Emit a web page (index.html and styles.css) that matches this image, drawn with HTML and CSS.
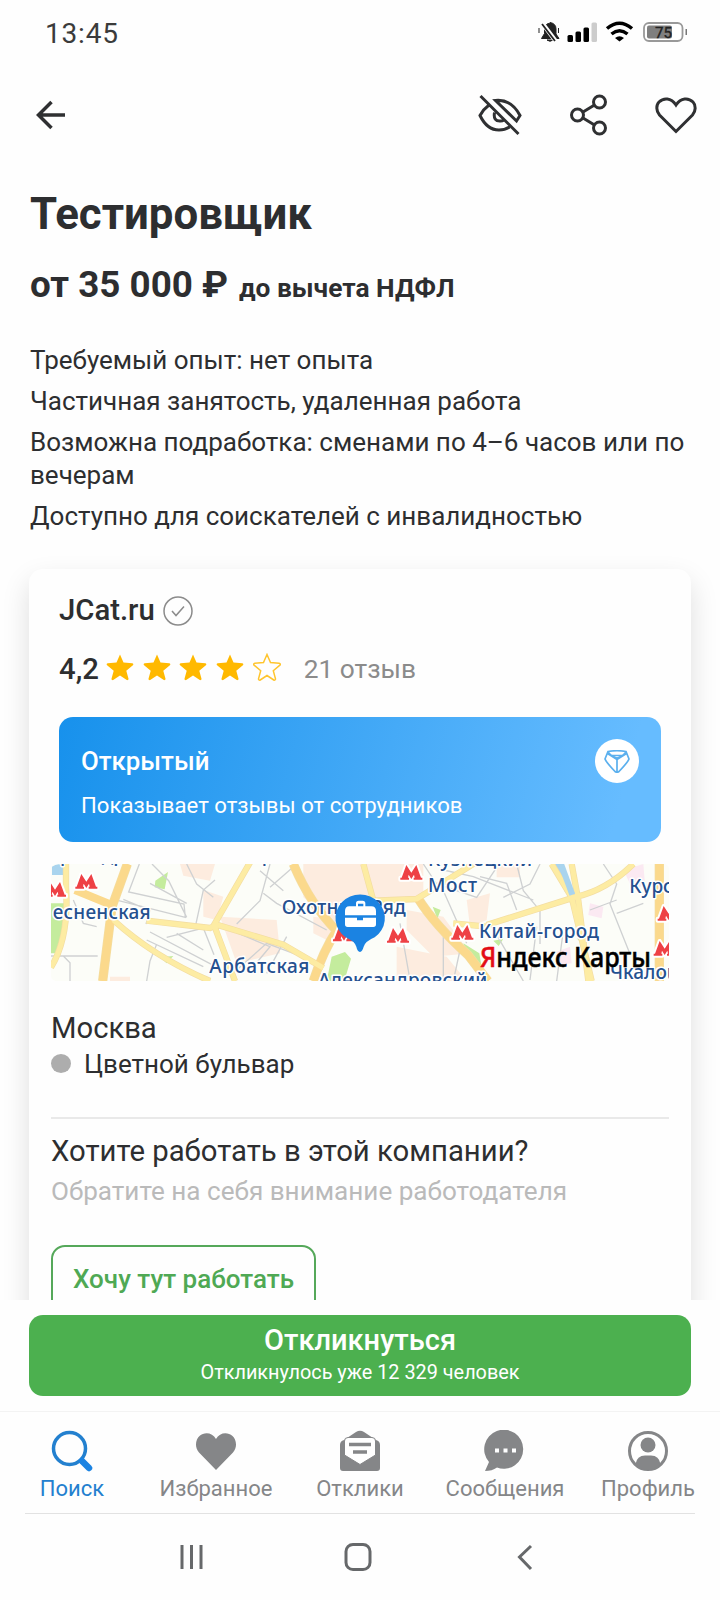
FILE: index.html
```html
<!DOCTYPE html>
<html lang="ru">
<head>
<meta charset="utf-8">
<title>Тестировщик</title>
<link rel="stylesheet" href="styles.css">
</head>
<body>
<svg class="defs" aria-hidden="true">
  <defs>
    <symbol id="star" viewBox="0 0 28 28"><path d="M14 1.500l3.500 8 8.700.7c1.200.1 1.500 1.400.7 2l-6.600 5.600 2.200 8c.2 1-.9 1.700-1.700 1.200L14 22.500l-6.800 4.500c-.8.5-1.900-.2-1.700-1.200l2.200-8-6.600-5.600c-.8-.6-.5-1.900.7-2l8.700-.7z"/></symbol>
    <symbol id="metro" viewBox="-6 -6 78 56" overflow="visible"><path d="M0 44V38H4L18 0L33 23L48 0L62 38H66V44H40V38H43L41 29L33 42L25 29L23 38H26V44Z" fill="#fff" stroke="#fff" stroke-width="12" stroke-linejoin="round"/><path d="M0 44V38H4L18 0L33 23L48 0L62 38H66V44H40V38H43L41 29L33 42L25 29L23 38H26V44Z" fill="#ee4145"/></symbol>
  </defs>
</svg>
<main class="screen">
  <header class="status">
    <span class="time">13:45</span>
    <svg class="status-icons" width="150" height="24" viewBox="0 0 150 24">
      <path d="M3.500 18.500l3-5V9q1-5.500 4.500-5.500l1-1q6 1 6 6.500v5l3 4.500zM9 20h6q-3 2.500-6 0M1 8v5M20.500 8v5" fill="#222" stroke="#222" stroke-width="1"/>
      <path d="M4.500 3.500L18 21.500" stroke="#fff" stroke-width="4.500"/><path d="M4 4L17 21" stroke="#222" stroke-width="1.800"/>
      <rect x="29.500" y="15" width="5.500" height="7" rx="1.500"/><rect x="37.500" y="11.500" width="5.500" height="10.500" rx="1.500"/><rect x="45.500" y="7.500" width="5.500" height="14.500" rx="1.500"/><rect x="53.500" y="2.500" width="5.500" height="19.500" rx="1.500" fill="#ccc"/>
      <path d="M69 8.500q12.500-10.500 25 0M73.500 14q8-6.500 16 0" fill="none" stroke="#000" stroke-width="3.500"/><path d="M77 18q4.500-3.500 9 0L81.500 21.500z"/>
      <rect x="106" y="3" width="38.500" height="18" rx="5" fill="#fff" stroke="#999" stroke-width="1.800"/><rect x="109" y="5.500" width="25" height="13" rx="2" fill="#7f7f7f"/><rect x="147.500" y="9" width="1.500" height="6" fill="#777"/>
      <text class="battery" x="117" y="17.500">75</text>
    </svg>
  </header>
  <nav class="toolbar">
    <svg width="30" height="30" viewBox="0 0 30 30" class="line arrow"><path d="M29 15H3M15.500 2L2.500 15l13 13"/></svg>
    <div class="tools">
      <svg width="44" height="44" viewBox="0 0 44 44" class="line"><path d="M2.500 3l38 38M10.500 12.500Q5 16.500 2 22.500q7 14.500 19 14.500 6 0 10.500-3M17.500 7.500q16-1.500 24.500 15l-3.500 5.500zM16.500 19.500q-1.500 9 6 8.500 2 0 3.500-1"/></svg>
      <svg width="38" height="42" viewBox="0 0 38 42" class="line"><circle cx="29.500" cy="8" r="6"/><circle cx="7.500" cy="21" r="6"/><circle cx="29.500" cy="34" r="6"/><path d="M13 18l11.500-7M13 24l11.500 7"/></svg>
      <svg width="42" height="38" viewBox="0 0 42 38" class="line"><path d="M21 35.500L4.500 19C1 15 1 9 4 6c4.500-4.500 12-4.500 17 3 5-7.500 12.500-7.500 17-3 3 3 3 9-.5 13z"/></svg>
    </div>
  </nav>
  <section class="intro">
    <h1>Тестировщик</h1>
    <p class="salary"><span class="sum">от 35 000 ₽</span> <small>до вычета НДФЛ</small></p>
    <p>Требуемый опыт: нет опыта</p>
    <p>Частичная занятость, удаленная работа</p>
    <p>Возможна подработка: сменами по 4–6 часов или по<br>вечерам</p>
    <p>Доступно для соискателей с инвалидностью</p>
  </section>
  <article class="card">
    <div class="company"><span class="name">JCat.ru</span>
      <svg width="30" height="30" viewBox="0 0 30 30"><circle cx="15" cy="15" r="14" class="verify"/><path d="M9 15l4 4.500 8-9" class="verify"/></svg>
    </div>
    <div class="rating"><span class="score">4,2</span>
      <div class="stars">
        <svg class="star"><use href="#star"/></svg><svg class="star"><use href="#star"/></svg><svg class="star"><use href="#star"/></svg><svg class="star"><use href="#star"/></svg><svg class="star empty"><use href="#star"/></svg>
      </div>
      <span class="reviews">21 отзыв</span>
    </div>
    <div class="banner">
      <div><b class="open">Открытый</b><span class="open-note">Показывает отзывы от сотрудников</span></div>
      <span class="badge"><svg width="26" height="23" viewBox="0 0 26 23"><path d="M4 1.500q9-1.500 18 0L25 9q-1 3-10 12.500-2 1.500-4 0Q2 12 1 9zM4 2q4 5 9 6 5-1 9-6M8 5.500h10M13 8v13.500M3.500 3.500l9.500 6 9.500-6"/></svg></span>
    </div>
    <svg class="map" viewBox="63 42 1854 351" preserveAspectRatio="none">
      <rect x="63" y="42" width="1854" height="351" fill="#fcfdf8"/>
      <g fill="#fdecdf">
        <path d="M450 42h105l-15 50-80-15zM520 120l60 20-20 70-40-10zM570 200l170 10 10 100-130 30zM820 42h180v130l-70 60-110-90zM850 200l80 10-20 70-60-30zM1000 42h180v100l-180 20zM1130 180l110 20 80 110-110 10-80-80zM1310 150l70-20-10 80-50 20zM1100 290l150 30 60 73h-210zM240 380h60v13h-60zM1400 42h70v40h-70z"/>
      </g>
      <path d="M1780 60l60-18 5 60-35 20zM1680 160l40 10-5 35-40-10zM1580 305l40-15 5 50-40 5z" fill="#fbe9f2"/>
      <g fill="#c4ec9d"><path d="M376 92l38-26-10 52-30-6zM63 160h42v60l-20 90H63zM390 322l40-4-20 22zM905 320l40-14 18 20-20 67h-53zM1208 170l24 10-10 26zM1300 280l48 30 10 60-40-40zM1390 272l30-6-14 22zM1640 265l30 10-5 15z"/></g>
      <path d="M66 50q20-15 40 0v25H66zM1575 42h20l30 75-20 10z" fill="#a9d4ee"/>
      <g class="streets"><path d="M328 42l-32 84 166 36 4 40-200-50M280 148l80 34-12 40M360 100l110 60M366 42l50 50 54 110M470 42l30 60 50 40M555 90L520 120l-24 110M200 230l-40-10-30-70M63 318h140M100 318l20 20v55M350 393l10-60 20-50M360 246l190 100M350 270l170 80M410 262l110-28 32 80M440 250l80 50M690 62l70 60M720 42l-30 110-70 70M700 130l40 30 150 80M600 240l120 50-50 60M620 360l90-80 160 60M770 260l-60 110M800 42l-80 70"/></g>
      <g class="streets"><path d="M1110 220l30 170M1180 42l40 60 120 40 60-90M1230 100l80 180M1240 60l90 20 180 70M1350 80l80 20 30 80M1460 42l20 80 50 60v100M1530 42l-30 60-80 40M1240 260v133M1290 300l-20 93M1380 220l100 173M1520 230l-20 160M1680 180l80-30M1720 42l40 60-20 60 60 150M1840 160l-80 30M1600 240l-20 153"/></g>
      <g class="roads">
        <path class="edge r1" d="M292 42L246 170 218 393M790 42q50 120 130 200-40 60-70 151M1164 145q50 80 150 170l60 78M1888 42v351"/>
        <path class="edge r2" d="M670 20L552 225 615 393M350 212l190 22 20-10 200 60 120 70M250 210q120 110 290 183M108 42v70q10 150-45 240M1565 42l60 100 60 251M1625 42l20 110 30 241M1370 225l270-85q90-20 170-98M1000 42l30 110 130-5 210-130M1270 220l100 10"/>
        <path class="r1" d="M292 42L246 170 218 393M135 120l110 45M790 42q50 120 130 200-40 60-70 151M1164 145q50 80 150 170l60 78M1888 42v351"/>
        <path class="r2" d="M670 20L552 225 615 393M350 212l190 22 20-10 200 60 120 70M250 210q120 110 290 183M108 42v70q10 150-45 240M1565 42l60 100 60 251M1625 42l20 110 30 241M1370 225l270-85q90-20 170-98M1000 42l30 110 130-5 210-130M1270 220l100 10"/>
      </g>
      <path d="M1593 42l34 92" stroke="#a9d4ee" stroke-width="18"/>
      <g class="places">
        <text x="68" y="206" textLength="294">есненская</text>
        <text x="755" y="191" textLength="372">Охотный Ряд</text>
        <text x="538" y="370" textLength="300">Арбатская</text>
        <text x="864" y="411" textLength="508">Александровский</text>
        <text x="1194" y="47" textLength="312">Кузнецкий</text>
        <text x="1194" y="126" textLength="147">Мост</text>
        <text x="1347" y="265" textLength="360">Китай-город</text>
        <text x="1798" y="129">Курская</text>
        <text x="1740" y="386">Чкаловская</text>
        <text x="90" y="34">р</text><text x="215" y="36">д</text><text x="250" y="32">р</text><text x="695" y="34">р</text>
      </g>
      <use href="#metro" x="130" y="66" width="78" height="56"/><use href="#metro" x="36" y="90" width="78" height="56"/><use href="#metro" x="1105" y="39" width="78" height="56"/><use href="#metro" x="1065" y="228" width="78" height="56"/><use href="#metro" x="1258" y="219" width="78" height="56"/><use href="#metro" x="903" y="224" width="78" height="56"/><use href="#metro" x="1877" y="162" width="78" height="56"/><use href="#metro" x="1865" y="267" width="78" height="56"/>
      <path d="M990 306q-8-2-11-16-5-16-32-28a74 71 0 1 1 87 0q-28 12-33 28-4 14-11 16z" fill="#1b83e2"/>
      <path d="M958 169h20v-9q0-8 8-8h12q8 0 8 8v9h18q14 0 14 14v13h-93v-13q0-14 13-14zM984 169h16v-8h-16zM945 203h36v8h18v-8h39v20q0 8-8 8h-77q-8 0-8-8z" fill="#fff" fill-rule="evenodd"/>
      <text class="brand" x="1350" y="352" textLength="513" lengthAdjust="spacingAndGlyphs"><tspan fill="#e30d16">Я</tspan>ндекс Карты</text>
    </svg>
    <div class="place">
      <p class="city">Москва</p>
      <p class="station"><i></i><span>Цветной бульвар</span></p>
    </div>
    <div class="want">
      <p class="question">Хотите работать в этой компании?</p>
      <p class="hint">Обратите на себя внимание работодателя</p>
      <button class="outline">Хочу тут работать</button>
    </div>
  </article>
</main>
<div class="apply-bar"><button class="apply"><span class="apply-main">Откликнуться</span><span class="apply-sub">Откликнулось уже 12 329 человек</span></button></div>
<nav class="tabs">
  <a class="active"><svg viewBox="0 0 42 42"><circle cx="18.500" cy="18.500" r="16" fill="none" stroke="#2380cf" stroke-width="3.500"/><path d="M31 31l7 7" stroke="#1b83e2" stroke-width="6.500" stroke-linecap="round"/></svg><span>Поиск</span></a>
  <a><svg viewBox="0 0 42 42"><path d="M21 40L4 22.500C-1 17 1 9 4.500 6 9.500 1.500 17.500 2.500 21 9 24.500 2.500 32.500 1.500 37.500 6 41 9 43 17 38 22.500z"/></svg><span>Избранное</span></a>
  <a><svg viewBox="0 0 42 42"><path d="M1 15q0-4 4-5L17 2q4-2.500 8 0l12 8q4 1 4 5v23q0 3-3 3H4q-3 0-3-3z"/><path d="M5.500 11q0-3.500 3.500-3.500h24q3.500 0 3.500 3.500v14L21 34.500 5.500 25z" fill="#fff" stroke="#858688"/><path d="M10 14.500h22M14 22h14" stroke="#858688" stroke-width="3.500"/></svg><span>Отклики</span></a>
  <a class="messages"><svg viewBox="0 0 42 42"><path d="M1 41l4-9A19.500 19.500 0 1 1 13 37.500Q8 41 1 41z"/><path d="M11 18.500h4v4h-4zM19.500 18.500h4v4h-4zM28 18.500h4v4h-4z" fill="#fff"/></svg><span>Сообщения</span></a>
  <a><svg viewBox="0 0 42 42"><circle cx="21" cy="21" r="18.500" fill="#fff" stroke="#858688" stroke-width="3"/><circle cx="21" cy="15" r="7.500"/><path d="M8.500 34Q10 25.500 18 25.500h6q8 0 9.500 8.500-12 11-25 0z"/></svg><span>Профиль</span></a>
</nav>
<footer class="system">
  <svg viewBox="0 0 30 30"><path d="M7 3v24M16.500 3v24M26 3v24"/></svg>
  <svg viewBox="0 0 30 30"><rect x="3" y="2.500" width="24" height="25" rx="7"/></svg>
  <svg viewBox="0 0 30 30"><path d="M20 4L8.500 15 20 27"/></svg>
</footer>
</body>
</html>
```

FILE: styles.css
```css
* { box-sizing: border-box; }
body { margin: 0; width: 720px; height: 1600px; overflow: hidden; background: #fefefe; color: #2d2e30; font-family: Roboto, sans-serif; display: flex; flex-direction: column; }
p, h1 { margin: 0; }
button { font-family: inherit; cursor: pointer; }
.defs { position: absolute; width: 0; height: 0; }
.screen { height: 1300px; overflow: hidden; flex: none; display: flex; flex-direction: column; }

.status { height: 66px; flex: none; display: flex; justify-content: space-between; align-items: center; padding: 0 32px 0 45px; }
.time { font-size: 28px; letter-spacing: .8px; color: #3b3b3b; }
.status-icons { margin-bottom: 3px; }
.battery { font-size: 15px; fill: #222; stroke: #222; stroke-width: .4; }
.toolbar { height: 98px; flex: none; display: flex; justify-content: space-between; align-items: center; padding: 0 23px 0 36px; }
.tools { display: flex; align-items: center; gap: 47.500px; }
.line { fill: none; stroke: #2f3032; stroke-width: 3; }
.arrow { stroke-width: 3.500; }

.intro { flex: none; padding: 25px 30px 0; height: 405px; font-size: 26px; line-height: 33px; }
.intro h1 { font-size: 43.800px; line-height: 50px; font-weight: 700; white-space: nowrap; }
.salary { margin: 23px 0 33px; line-height: 45px; font-weight: 700; display: flex; align-items: baseline; gap: 11px; }
.sum { font-size: 36.800px; }
.salary small { font-size: 26.300px; }
.intro p + p { margin-top: 8px; }
.intro .salary + p { margin-top: 0; }
.intro p { white-space: nowrap; }

.card { flex: none; margin: 0 29px; height: 800px; padding: 23px 22px 0; background: #fefefe; border-radius: 14px; box-shadow: 0 12px 28px rgba(0, 0, 0, .13); }
.company { height: 38px; display: flex; align-items: center; gap: 8px; padding-left: 8px; }
.name, .score { font-size: 29.300px; line-height: 34px; font-weight: 500; }
.name { margin-bottom: 2px; }
.verify { fill: none; stroke: #8b8b8b; stroke-width: 1.500; }
.rating { height: 38px; margin-top: 20px; padding-left: 8px; display: flex; align-items: center; }
.score { width: 47px; }
.stars { display: flex; gap: 8.700px; margin-bottom: 4px; }
.star { width: 28px; height: 28px; fill: #ffb900; }
.empty { fill: none; stroke: #ffc52e; stroke-width: 1.500; }
.reviews { margin-left: 23px; font-size: 26.300px; color: #8b8b8b; }
.banner { margin: 29px 8px 0; height: 125px; border-radius: 14px; padding: 22px; display: flex; justify-content: space-between; background: linear-gradient(105deg, #1791ec, #66bcff 92%); color: #fff; }
.open, .open-note { display: block; white-space: nowrap; }
.open { font-size: 25.800px; line-height: 44px; font-weight: 500; }
.open-note { font-size: 22.150px; line-height: 45px; }
.badge { width: 44px; height: 44px; border-radius: 50%; background: #fff; display: grid; place-items: center; }
.badge svg { fill: none; stroke: #5bb0ee; stroke-width: 1.700; }
.map { display: block; width: 618px; height: 117px; margin-top: 22px; border-radius: 5px; }
.streets { fill: none; stroke: #cfd1d2; stroke-width: 4; }
.roads { fill: none; }
.r1 { stroke: #fbd98c; stroke-width: 24; }
.r2 { stroke: #fdeca3; stroke-width: 15; }
.roads .edge { stroke: #f3dda2; }
.roads .edge.r1 { stroke-width: 28; }
.roads .edge.r2 { stroke-width: 19; }
.places { font: 500 57px "Noto Sans", sans-serif; fill: #24508f; stroke: #fff; stroke-width: 9px; paint-order: stroke; stroke-linejoin: round; }
.brand { font: 500 82px "Noto Sans", sans-serif; stroke: #000; stroke-width: 1.500; }
.brand tspan { stroke: #e30d16; }
.place { height: 138px; padding-top: 29px; border-bottom: 2px solid #e9e9e9; }
.city { font-size: 29.200px; line-height: 36px; }
.station { font-size: 26px; line-height: 37px; display: flex; align-items: center; gap: 13px; }
.station i { width: 20px; height: 19px; border-radius: 50%; background: #adadad; margin-bottom: 2px; }
.want { padding-top: 13px; white-space: nowrap; }
.question { font-size: 29.300px; line-height: 38px; }
.hint { font-size: 26.100px; line-height: 42px; color: #bababa; }
.outline { display: block; width: 265px; height: 68px; margin-top: 33px; padding: 0; border: 2px solid #55a85a; border-radius: 14px; background: none; color: #4fa954; font-size: 26px; font-weight: 500; white-space: nowrap; }

.apply-bar { height: 111px; flex: none; padding: 15px 29px 0; }
.apply { width: 662px; height: 81px; border: 0; border-radius: 14px; background: #4cb04f; color: #fff; display: flex; flex-direction: column; align-items: center; padding: 8px 0 0; }
.apply-main { font-size: 29px; line-height: 34px; font-weight: 500; }
.apply-sub { font-size: 19.850px; line-height: 32px; }
.tabs { height: 102px; flex: none; border-top: 1px solid #f3f3f3; display: grid; grid-template-columns: repeat(5, 144px); color: #858688; font-size: 22px; }
.tabs a { display: flex; flex-direction: column; align-items: center; padding-top: 18px; }
.tabs svg { width: 42px; height: 42px; fill: currentColor; }
.tabs span { line-height: 30px; margin-top: 2px; white-space: nowrap; }
.tabs .active { color: #2380cf; }
.tabs .messages { padding-left: 2px; }
.system { height: 87px; flex: none; margin: 0 25px; border-top: 1px solid #e2e2e2; display: flex; justify-content: space-between; align-items: center; padding: 0 154px 0 150px; }
.system svg { width: 30px; height: 30px; fill: none; stroke: #66686a; stroke-width: 3; }
```
